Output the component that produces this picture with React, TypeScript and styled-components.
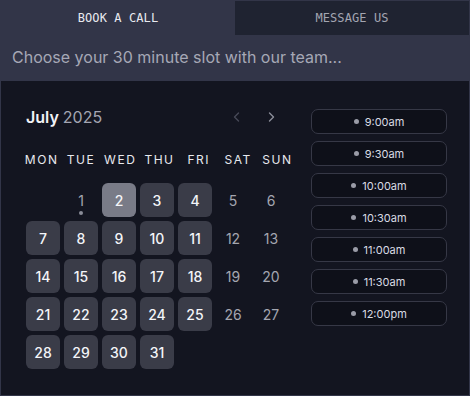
import React from "react";
import styled, { createGlobalStyle } from "styled-components";

const GlobalStyle = createGlobalStyle`
  html, body {
    margin: 0;
    padding: 0;
    background: #323548;
  }
  * {
    box-sizing: border-box;
  }
`;

const Shell = styled.div`
  width: 470px;
  height: 396px;
  padding: 1px;
  background: #323548;
  display: flex;
  flex-direction: column;
  font-family: Inter, "Noto Sans", sans-serif;
`;

const Tabs = styled.div`
  display: grid;
  grid-template-columns: 234px 234px;
  height: 34px;
`;

const Tab = styled.div<{ $active?: boolean }>`
  display: flex;
  align-items: center;
  justify-content: center;
  font-family: "DejaVu Sans Mono", "Liberation Mono", monospace;
  font-size: 12px;
  letter-spacing: 0.1px;
  color: ${(p) => (p.$active ? "#e9eaf0" : "#a3a5b1")};
  background: ${(p) => (p.$active ? "transparent" : "#1f2331")};
`;

const Subtitle = styled.div`
  height: 46px;
  display: flex;
  align-items: center;
  padding: 0 11px 2px;
  font-size: 16px;
  color: #a6a8b6;
`;

const Panel = styled.div`
  flex: 1;
  background: #131520;
  display: flex;
  gap: 23px;
  padding: 24px 22px 0 25px;
`;

const Calendar = styled.div`
  width: 262px;
  display: flex;
  flex-direction: column;
`;

const MonthRow = styled.div`
  height: 24px;
  display: flex;
  align-items: center;
  justify-content: space-between;
`;

const MonthTitle = styled.div`
  font-size: 16px;
  line-height: 24px;
  color: #f1f2f6;
  font-weight: 600;

  span {
    font-weight: 400;
    color: #a4a6b2;
  }
`;

const Nav = styled.div`
  display: flex;
`;

const NavButton = styled.div<{ $dim?: boolean }>`
  width: 34px;
  height: 24px;
  display: flex;
  align-items: center;
  justify-content: center;
  color: ${(p) => (p.$dim ? "#474a57" : "#8c8e9a")};
`;

const WeekHeader = styled.div`
  display: grid;
  grid-template-columns: repeat(7, 1fr);
  width: 275px;
  margin: 23px 0 0 -4px;
  height: 16px;
`;

const WeekDay = styled.div`
  text-align: center;
  font-size: 12px;
  line-height: 16px;
  font-weight: 400;
  letter-spacing: 1.5px;
  color: #e8e9ee;
`;

const Grid = styled.div`
  display: grid;
  grid-template-columns: repeat(7, 34px);
  grid-auto-rows: 34px;
  gap: 4px;
  margin-top: 15px;
`;

type Variant = "open" | "selected" | "muted" | "empty";

const DayCell = styled.div<{ $variant: Variant }>`
  position: relative;
  border-radius: 6px;
  display: flex;
  align-items: center;
  justify-content: center;
  font-size: 14px;
  font-weight: ${(p) => (p.$variant === "muted" ? 400 : 500)};
  color: ${(p) => (p.$variant === "muted" ? "#a4a6b0" : "#f4f5f8")};
  background: ${(p) =>
    p.$variant === "selected"
      ? "#797b87"
      : p.$variant === "open"
      ? "#3a3c48"
      : "transparent"};
`;

const TodayDot = styled.span`
  position: absolute;
  left: 50%;
  bottom: 2px;
  width: 4px;
  height: 4px;
  margin-left: -2px;
  border-radius: 50%;
  background: #8a8c97;
`;

const Slots = styled.div`
  width: 136px;
  padding-top: 4px;
  display: flex;
  flex-direction: column;
  gap: 7px;
`;

const Slot = styled.div`
  height: 25px;
  border: 1px solid #363846;
  border-radius: 7px;
  background: #0e1019;
  display: flex;
  align-items: center;
  justify-content: center;
  gap: 6px;
  font-size: 11px;
  color: #d9dbe3;
`;

const SlotDot = styled.span`
  width: 5px;
  height: 5px;
  border-radius: 50%;
  background: #9a9ca7;
`;

const Chevron = ({ dir }: { dir: "left" | "right" }) => (
  <svg width="10" height="10" viewBox="0 0 10 10" fill="none">
    <path
      d={dir === "left" ? "M6.5 1 L2.5 5 L6.5 9" : "M3.5 1 L7.5 5 L3.5 9"}
      stroke="currentColor"
      strokeWidth="1.4"
      strokeLinecap="round"
      strokeLinejoin="round"
    />
  </svg>
);

const weekDays = ["MON", "TUE", "WED", "THU", "FRI", "SAT", "SUN"];
const times = ["9:00am", "9:30am", "10:00am", "10:30am", "11:00am", "11:30am", "12:00pm"];

const days: { n?: number; v: Variant; today?: boolean }[] = [{ v: "empty" }];
for (let n = 1; n <= 31; n++) {
  const col = n % 7; // July 1 2025 is a Tuesday: 5 -> SAT, 6 -> SUN
  const weekend = col === 5 || col === 6;
  let v: Variant = weekend ? "muted" : "open";
  if (n === 1) v = "muted";
  if (n === 2) v = "selected";
  days.push({ n, v, today: n === 1 });
}

export default function App() {
  return (
    <>
      <GlobalStyle />
      <Shell>
        <Tabs>
          <Tab $active>BOOK A CALL</Tab>
          <Tab>MESSAGE US</Tab>
        </Tabs>
        <Subtitle>Choose your 30 minute slot with our team...</Subtitle>
        <Panel>
          <Calendar>
            <MonthRow>
              <MonthTitle>
                July <span>2025</span>
              </MonthTitle>
              <Nav>
                <NavButton $dim>
                  <Chevron dir="left" />
                </NavButton>
                <NavButton>
                  <Chevron dir="right" />
                </NavButton>
              </Nav>
            </MonthRow>
            <WeekHeader>
              {weekDays.map((d) => (
                <WeekDay key={d}>{d}</WeekDay>
              ))}
            </WeekHeader>
            <Grid>
              {days.map((d, i) => (
                <DayCell key={i} $variant={d.v}>
                  {d.n}
                  {d.today && <TodayDot />}
                </DayCell>
              ))}
            </Grid>
          </Calendar>
          <Slots>
            {times.map((t) => (
              <Slot key={t}>
                <SlotDot />
                {t}
              </Slot>
            ))}
          </Slots>
        </Panel>
      </Shell>
    </>
  );
}
